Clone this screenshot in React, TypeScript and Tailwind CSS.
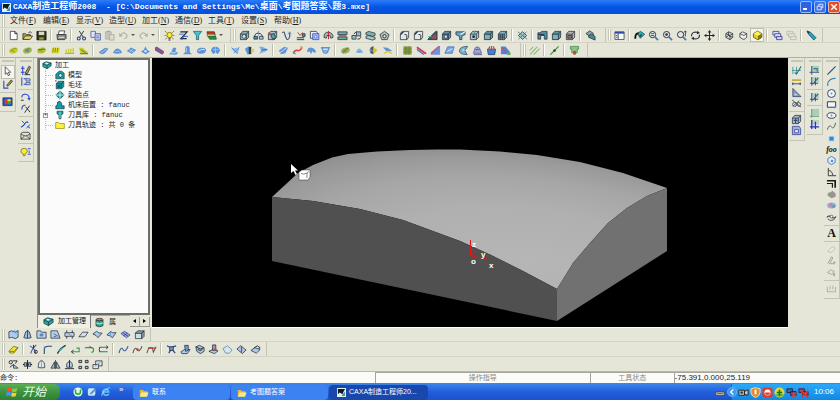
import React from 'react';

// ---------- icon drawing ----------

const K = '#222a35';
const B = '#5d93d6';
const L = '#a9cdf0';
const T = '#3f9aa8';
const G = '#3a9a48';
const D = '#b2b2a6';

const line = (d: string, c = K, w = 1) => <path d={d} fill="none" stroke={c} strokeWidth={w} />;
const fill = (d: string, f = B, s = 'none', w = 0.8) => <path d={d} fill={f} stroke={s} strokeWidth={w} />;

const box = (f = L, s = K) => (
  <>
    {fill('M1.5 4.5L4 1.5H10.5V8L8 10.5H1.5Z', f, s)}
    {line('M1.5 4.5H8V10.5M8 4.5L10.5 1.5', s, 0.8)}
  </>
);
const lens = (inner: React.ReactNode = null) => (
  <>
    <circle cx="5" cy="5" r="3.4" fill="#dfe6e4" stroke={K} />
    {line('M7.5 7.5L11 11', '#3c7fc0', 2)}
    {inner}
  </>
);
const blob = (c: string) => (
  <>
    <ellipse cx="6" cy="6" rx="5" ry="3.2" fill={c} transform="rotate(-20 6 6)" />
    {line('M3 7.5Q6 2.5 9.5 4.5M3.5 5.5L8 8', '#6a8a44', 0.8)}
  </>
);

const ICONS: Record<string, React.ReactNode> = {
  // standard
  new: <>{fill('M2.5 1.5H7.5L10 4V10.5H2.5Z', '#fff', K)}{line('M7.5 1.5V4H10')}</>,
  open: <>{fill('M1 10V4H4L5 5H9V6.5L7 10Z', '#b5a62a', K)}{fill('M1 10.2L3.5 6.5H11.5L9 10.2Z', '#f0e060', K)}{line('M7 3Q9 .8 10.5 3', K, 0.9)}</>,
  save: <>{fill('M1 1.5H11V10.8H1Z', '#33331c', '#111')}{fill('M3 1.8H9V5.6H3Z', '#d8d8c4')}{fill('M3.5 8H8.5V10.5H3.5Z', '#9aa020')}</>,
  print: <>{fill('M3.5 1H9.5L8.5 5H2.5Z', '#fff', K)}{fill('M1 5H11V9L9.5 10.5H1.5Z', '#8a8c84', K)}{line('M3 8H9', '#eee')}</>,
  cut: <>{line('M3.5 1L8 8M8.5 1L4 8')}<circle cx="3" cy="9.2" r="1.6" fill="none" stroke="#27359b" strokeWidth="1.1" /><circle cx="8.8" cy="9.2" r="1.6" fill="none" stroke="#27359b" strokeWidth="1.1" /></>,
  copy: <>{fill('M1 1.5H6V8H1Z', '#dfe4f4', '#4550a8')}{fill('M5.5 4H11.3V11H5.5Z', '#cfd8f2', '#3340a0')}{line('M6.8 6.5H10M6.8 8.5H10', '#3340a0', 0.7)}</>,
  paste: <>{fill('M1.5 2H8V10H1.5Z', '#c5c5b8', D)}{fill('M6 5H11V11H6Z', '#dcdccf', '#a2a296')}{line('M3 1.5H6.5', '#969688')}</>,
  undo: <>{line('M2.5 6Q5 1.5 8.5 4.2T7 9.5', D, 1.3)}{fill('M.8 3.2L1.8 7.8L5.5 6Z', D)}</>,
  redo: <>{line('M9.5 6Q7 1.5 3.5 4.2T5 9.5', D, 1.3)}{fill('M11.2 3.2L10.2 7.8L6.5 6Z', D)}</>,
  bulb: <><circle cx="6" cy="5.5" r="2.9" fill="#ffee30" stroke="#77741a" />{line('M1 1L3 3M11 1L9 3M.5 6H2M11.5 6H10M1.5 10L3.3 8.4M10.5 10L8.7 8.4', '#808020')}{line('M4.8 9.5H7.2M5 11H7', K)}</>,
  zline: <>{line('M2.5 2H10L3 9.5H9.5', K, 1.3)}{line('M1 4.5H6M6.5 7H11M4 11L8 5', '#2c68c8')}</>,
  funnel: <>{fill('M1.5 1.5H10.5L7.2 6V10.5H4.8V6Z', '#49c4d0', '#155c78')}</>,
  layers: <>{fill('M1 2H9L10 5H2Z', '#cc3a20', '#704')}{fill('M1 4.5H9.5L10.5 7.5H2Z', '#e8e020', '#664')}{fill('M2.5 7H10.5L11.3 10H4Z', '#16a040', '#153')}</>,
  // features
  feat1: <>{box('#8fb0b6')}<circle cx="5.5" cy="7" r="2" fill="#d6eef0" stroke={K} strokeWidth=".7" /></>,
  feat2: <>{line('M1.5 9Q1.5 3 6 3.5T10.5 9')}{fill('M1 7H5V10H1Z', T, K)}{fill('M7 7H11V10H7Z', L, K)}{line('M6 1V6', '#7a8ac0')}</>,
  feat3: <>{box('#aac0c4')}{fill('M4 5Q7 3 9 6V9L6 10Z', '#57a2b0', K)}{line('M1.5 2.5L4 5', '#b44')}</>,
  feat4: <>{line('M1.5 3Q3.5 1 4 4T6 9.5T9.5 7.5V3', '#31517a', 1.2)}{line('M7.5 4.5L9.5 2L11.3 4.5', B)}</>,
  feat5: <>{line('M2 8.5H10M2 10.5H10', K)}{line('M3 2.5L5.5 6L8.5 2.5', '#b03a3a')}{fill('M8 4H11V7H8Z', T, K)}</>,
  feat6: <>{fill('M1.5 1.5H8L9.5 3.5V9H1.5Z', '#e8eeff', K)}{fill('M4 4H10.8V10.5H4Z', '#a8b8f4', '#3048c0')}<circle cx="7.3" cy="7.3" r="1.4" fill="#fff" stroke="#3048c0" strokeWidth=".7" /></>,
  feat7: <>{fill('M1 8Q1 2 6 2.5T11 8L8.5 9L7.5 6H4.5L3.5 9Z', '#9bb7b8', K)}{line('M6 1V10', '#c03030', 1.2)}</>,
  feat8: <>{fill('M1 2H11V5H1Z', '#7aa', K)}{fill('M1 7.5H11V10.5H1Z', '#6a9', K)}{line('M2 6.3H10', '#b33', 1.2)}</>,
  feat9: <>{fill('M1 6H5.5V10H1Z', '#8fc0bf', K)}{fill('M6 2H10.5V6.5H6Z', '#95b9d4', K)}{line('M3 4.5L6 1.5M7 10Q11 10 10.5 7')}</>,
  feat10: <>{fill('M1 3L4 1.5L11 3.5V6L8 7L1 5Z', '#7fb2ac', K)}{fill('M1 7L4 6L11 8V10L8 11L1 9Z', '#aac8c3', K)}</>,
  feat11: <>{fill('M1 5L6 1.5L11 5L9 10.5H3Z', '#b8c2bb', K)}<circle cx="6" cy="6.8" r="1.8" fill="#e6e6d8" stroke={K} /></>,
  round: <>{fill('M1.5 10.5V5Q1.5 1.5 5 1.5H10.5V8L8.5 10.5Z', '#dfe8ea', K)}{line('M8.5 10.5V6Q8.5 4.5 6 5', K)}{line('M1.8 5L5 1.8', K, 1.4)}</>,
  draft: <>{fill('M1 10L9.5 1.5H11V10.5H1Z', '#3b5862', K)}{fill('M5 8L10 4V9.5H5Z', '#a74858')}{line('M1 7H5', '#4c9')}</>,
  shell: <>{box('#6b8aa8')}{fill('M3.5 5.5H7V9H3.5Z', '#cfe6f4', K)}</>,
  rib: <>{fill('M1 2H11V5L7.5 6.5V10.5H5V7L1 5Z', '#69a4c4', K)}{line('M6 5L11 2', '#eef', 1.2)}</>,
  hole: <>{box('#b4c4c0')}<circle cx="5" cy="7.3" r="1.5" fill={K} />{line('M6 1V5', T, 1.2)}</>,
  block: <>{box('#5d94a4')}{fill('M2.3 5.5H7.3V9.7H2.3Z', '#86b2b4')}</>,
  mesh: <>{box('#84b3c6')}{line('M3.5 4.5V10.5M5.8 4.5V10.5M1.5 6.5H8M1.5 8.5H8', K, 0.8)}</>,
  diamond: <>{fill('M6 1.8L10.5 6L6 10.2L1.5 6Z', '#9cc7cc', K)}{line('M1 2L11 10M1.5 10L10.5 2', '#4b7378', 0.9)}</>,
  mold1: <>{fill('M1 3H4L5 1.5H11V10H8V6H4V10H1Z', '#4f8db0', K)}{line('M1 5H8')}</>,
  mold2: <>{box('#b6b6ae')}{fill('M3 6H7V9H3Z', '#a07074', K)}</>,
  solid: <>{fill('M1 4L5 1L9 3.5V8L5 6.5Z', '#8ea7ac', K)}{fill('M4 6L7 4.5L11 7V11L7.5 9.5L4 8Z', '#3f8b9a', K)}</>,
  // view
  window: <>{fill('M1 2H11V10.3H1Z', '#fff', '#26324a')}{fill('M1 2H11V4H1Z', '#2d4ea8')}{line('M4.5 4V10', '#26324a')}{line('M2 6H3.5M2 8H3.5', '#445')}</>,
  repaint: <>{fill('M3.5 4L7 1.5L11.5 4.5L7 9Z', '#27b6be', K)}{line('M1.5 9.5Q1 4 5 3.5', '#111', 2)}{fill('M5.5 6L8 4L9 6L7 8Z', '#115f70')}</>,
  zoomall: lens(<>{line('M3.4 4H6.6M3.4 6H6.6', K, 0.8)}</>),
  zoomwin: lens(<circle cx="5" cy="5" r="1.4" fill={K} />),
  zoomdyn: lens(<>{line('M10.2 1V7M9 2.5L10.2 1L11.4 2.5', K, 0.9)}</>),
  rotate: <>{line('M1.8 7Q1.3 2.5 6 2.2L8.5 2.8M10.2 5Q10.8 9.5 6 9.8L3.5 9.2', K, 1.2)}{fill('M8 .8L10.8 3.4L7.5 4.5Z', K)}{fill('M4 11.2L1.2 8.6L4.5 7.5Z', K)}</>,
  pan: <>{line('M6 1.5V10.5M1.5 6H10.5', K, 1.1)}{fill('M6 0L8 2.6H4ZM6 12L8 9.4H4ZM0 6L2.6 4V8ZM12 6L9.4 4V8Z', K)}</>,
  wire: <>{fill('M2 4L5 2L9.5 4V8L6.5 10.5L2 8Z', '#d7d7ca', K)}{line('M2 4L6.5 6L9.5 4M6.5 6V10.5M5 2V6L2 8M5 6L9.5 8', K, 0.8)}</>,
  hidden: <>{fill('M2 4L5 2L9.5 4V8L6.5 10.5L2 8Z', '#efefe6', K)}{line('M2 4L6.5 6L9.5 4', K, 0.8)}</>,
  shade: <>{fill('M1.5 4L6 1.2L10.8 4V8L6.5 10.8L1.5 8Z', '#e4d410', '#4c4708')}{fill('M6.5 6.2L10.8 4V8L6.5 10.8Z', '#847708')}{fill('M2 4L6 1.7L10 4L6.5 6Z', '#fdf47c')}</>,
  cascade: <>{fill('M1 1.5H7.5V5.5H1Z', '#dfe2f4', '#28308c')}{fill('M3 4H9.5V8H3Z', '#dfe2f4', '#28308c')}{fill('M5 7H11V10.5H5Z', '#c8ccf0', '#28308c')}</>,
  cascadeoff: <>{fill('M1 1.5H7.5V5.5H1Z', '#e4e4d8', D)}{fill('M3 4H9.5V8H3Z', '#e4e4d8', D)}{fill('M5 7H11V10.5H5Z', '#e4e4d8', D)}</>,
  pencil: <>{fill('M1 1L5 2.5L11 8.5L8.5 11L3 5Z', '#1ba7c8', '#12475c')}{fill('M1 1L4 2.2L2.3 4Z', '#134')}</>,
  // machining
  m1: blob('#c9d02c'),
  m2: <>{blob('#a9b84c')}<circle cx="6" cy="6" r="1.6" fill="#6384a8" /></>,
  m3: <>{blob('#bcc834')}{line('M2 5H10', '#617c28')}</>,
  m4: <>{fill('M1.5 9L3 3H11L9.5 9Z', '#dcd82c')}{line('M3.5 3L3 8M6 3L5.5 8M8.5 3L8 8', '#7b7d20', 0.9)}</>,
  m5: <>{line('M1 9H11', '#b0b020', 1.4)}{line('M2.5 8V5M5 8V4M7.5 8V4M10 8V3', '#d0cc1c', 1.4)}</>,
  m6: <>{fill('M1 3H5L11 8V10H3Z', '#ccca2a')}{line('M2 9.5H11M3 5L9 9', '#3d7f3c')}</>,
  s1: <>{fill('M.8 8L5 5Q8 1.5 11.3 4Q7.5 10 3.5 10Z', B)}{line('M3 9L9.5 4', L)}</>,
  s2: <>{fill('M1 8.5Q4 3 7 4T11 8.5Q6 10.5 1 8.5Z', B)}{line('M3.5 7.5Q6 5.5 8.5 7.5', L)}</>,
  s3: <>{fill('M.8 6.5L5.5 2.8L11.2 5.5L6.5 9.5Z', B)}{line('M3 5L8.8 7.8M8 4L3.8 8', L)}</>,
  s4: <>{fill('M1 7L4 5.5L6 1.5L8 5.5L11 7L6 10Z', B)}<circle cx="6" cy="6.7" r="1.3" fill="#dcebff" /></>,
  s5: <>{fill('M1 3L3 1.5L11.2 7L9 10.5L1 6Z', '#4a68b4')}{line('M1.5 3L10.5 9', '#d13c4a', 1.6)}</>,
  s6: <>{fill('M1 10L4 7L5.5 3H9L8 7L11 8.5L9 10.5Z', B)}{line('M3.5 8.5H8.5', '#dcebff')}</>,
  s7: <>{fill('M3.5 8V4Q3.5 1 6 1T8.5 4V8L11 10H1Z', B)}{line('M5 3V8', L)}</>,
  s8: <>{fill('M1 7.5Q1 3.5 5 3T11 4.5Q11 9 7 9.5T1 7.5Z', B)}{line('M2.5 6.5Q6 4 9.5 5', '#d8ebff')}</>,
  s9: <>{fill('M1 6Q2 1.5 6 1.8T11 6L8.5 10L6 8L3.5 10Z', B)}{line('M3 5L9 5M6 2V8', L, 0.8)}</>,
  s10: <>{fill('M1 2.5Q5 5 10.5 2L8.5 9.5Q4 9 1 2.5Z', '#8fbce8')}{line('M2 3L8.5 9.5M4 9L10 3', '#4e88c8', 0.8)}</>,
  s11: <>{fill('M1 4L5 1.5L7.5 3V9L4 10.5Z', B)}{fill('M5.2 2H8V10H5.2Z', '#3b3d3c')}{fill('M8 4H11V8H8Z', '#ddd055')}</>,
  s12: <>{fill('M1 2H5L11 5L8 7L1.5 9.5L3.5 5.5Z', '#7db0e6')}{line('M3.5 5.5L10 5', '#2b65b4')}</>,
  s13: <>{fill('M1 6L7 2L11 3L8 9L3 10Z', B)}{line('M1.5 9L10 2.5', '#d8e8ff')}</>,
  s14: <>{line('M1.5 9.5Q3 5 6 6T11 2.5', '#e04030', 1.6)}{line('M1 7L4 10', B, 1.2)}{fill('M8 2L11 1V4Z', '#e8a040')}</>,
  s15: <>{fill('M1 7.5Q2 2 6 3T11 7.5L8.5 8.5L7 6.5L5.5 10L4 7Z', B)}</>,
  s16: <>{line('M1 3H11M2.5 3Q3 9 6 9T9.5 3', B, 1.6)}{line('M4 6.5H8', '#2f64b4')}</>,
  s17: <>{blob('#a0b456')}{line('M3 8.5L9 3', '#4464aa')}</>,
  s18: <>{fill('M2 8.5Q4 3 6.5 4T10 8.5Z', '#86b3e8')}{line('M4 7.5H8', B)}</>,
  s19: <>{fill('M2.5 3L6 1V10L2.5 9Z', '#54565c')}{fill('M6 3L10 4.5L9 8L6 9Z', '#d8c430')}{line('M1.5 6H5', B, 1.6)}</>,
  s20: <>{fill('M1 2.5L6 3L11.2 6.5L5 7Z', '#5d93d6')}{line('M2 9.5L6 7L11 9.5', '#e5c82a', 1.6)}</>,
  e1: <>{fill('M1.5 1.5H10.5V10.5H1.5Z', '#8b9836')}{line('M1.5 4.5H10.5M1.5 7.5H10.5M4.5 1.5V10.5M7.5 1.5V10.5', '#5f8246', 0.8)}</>,
  e2: <>{line('M1 2.5L11 9.5', '#c83c58', 2)}{line('M1 5L8.5 10.3', '#4862c4', 1.3)}</>,
  e3: <>{fill('M1 10.5V8L9 1H11V10.5Z', '#6c95dc')}{line('M1 9.5L10.5 1.5', '#c45a78', 1.3)}</>,
  e4: <>{fill('M1 9L4 2H11L9 9Z', '#7ba6e2', '#3e6fc0')}{line('M3.5 7L9.5 4', '#e4eeff')}</>,
  e5: <>{fill('M10.5 1.5Q2 1.5 1.5 6T10 10.5L7.5 6Z', '#7ab0c4', '#2d4b68')}<circle cx="6" cy="5.5" r="1.3" fill="#b5dae0" /></>,
  e6: <>{fill('M1.5 9L3.5 3Q6 1 8 3L10.5 9Z', '#a6a8d0', '#50549c')}{line('M4 5H8M2 10.5H11', '#50549c')}</>,
  e7: <>{fill('M1.5 4.5H10.5L9.5 10.5H2.5Z', '#4c7cc8', '#24406c')}{line('M3 4.5L4 1.5M6 4.5V1M9 4.5L8 1.5', '#c83848', 1.3)}</>,
  e8: <>{fill('M1 1.5H6L10.5 7V10H1Z', '#4e86d8')}{line('M2 3L6 6V9.5', '#d8485c', 1.4)}{fill('M8 8H11.5V11H8Z', '#58b058')}</>,
  hatch: line('M1 6L4.5 2M1 10.5L9 2M5 10.5L11.5 4', '#7fba6c', 1.1),
  trim: <>{line('M1.5 10.5L10.5 1.5', '#3b9440', 1.4)}<circle cx="6" cy="6" r="1.5" fill="#1e5c28" /></>,
  tool: <>{fill('M1.5 1.5H10.5V4.5H9V8.5H3V4.5H1.5Z', '#8cc08c', '#3f8a40')}{fill('M4.5 6.5H7.5V10.5H4.5Z', '#d33a3a')}</>,
  // left column
  cursor: fill('M3.5 .8V9L5.5 7.3L6.8 10.5L8.3 9.8L7 6.8H9.5Z', '#fff', K),
  sketch: <>{line('M2 2V10H7', '#3146c4', 1.2)}{fill('M5 7L10 1L11.5 2.5L6.5 8Z', '#a89a36', K)}</>,
  palette: <>{fill('M1 2H11V10.5H1Z', '#3050cc', K)}{fill('M3 3.5H6V9H3Z', '#e03828')}{fill('M6 3.5H9.5V6H6Z', '#f4e420')}{fill('M6 6H9.5V9H6Z', '#26aa48')}</>,
  brush: <>{line('M1 3.5H5M1 8H5M3 1V11', '#2946cf', 1.1)}{fill('M5.5 9L10 1L11.5 2.5L8 9.5Z', '#a8a060', K)}{line('M5 10.5H11')}</>,
  mirrorl: <>{line('M2 1.5V10.5M4 3H7M4 9H7', '#2946cf', 1.1)}{fill('M6.5 3H11V5.5H6.5ZM6.5 7H11V9.5H6.5Z', '#c4d2ee', '#35458c')}</>,
  arcl: <>{line('M2 6Q2 2 6 2.5T10 7', '#2946cf', 1.2)}{fill('M8 6.5H11.5L10 9.5Z', '#2946cf')}{line('M1 9H4', K)}</>,
  arcx: <>{line('M2 7Q2 2 6 2.5', '#2946cf', 1.2)}{line('M6 4L11 10M10.5 3L5 10.5')}</>,
  curvel: <>{line('M1 9Q4 8 5.5 5T9 4', '#2946cf', 1.3)}{line('M2 2L5 5M7 10L11 6M8 8L11 10', '#2946cf')}</>,
  mail: <>{fill('M1 4L3 2.5H9L11 4V10H1Z', '#e3e0cc', K)}{line('M1 4Q6 9 11 4M1 10L5 6.5M11 10L7 6.5', K, 0.8)}</>,
  lamp: <>{fill('M1 5.5Q1 2.5 4.5 2.5T8 5.5Q8 7.5 5.5 8.5V10.5H3.5V8.5Q1 8 1 5.5Z', '#f5ec3c', '#6c6820')}{line('M8.5 3H11.5M8.5 9H11.5M10 5V8', '#2946cf')}</>,
  // tree
  cam: <>{fill('M1 4L5 2L11 3.5V7L6 10.5L1 8Z', '#2fa3a3', '#103c3c')}{line('M1 4.5L6 6.5L11 3.5M6 6.5V10.5', '#103c3c', 0.8)}{fill('M5 3L8 4L6 5.3L3.4 4.4Z', '#d9f4f0')}</>,
  model: <>{fill('M1 10.5V5L5 1.5H8L11 4V10.5Z', '#18a0a6', '#0b3f46')}<circle cx="6.5" cy="6.5" r="2.2" fill="#d4f0f0" stroke="#0b3f46" /></>,
  blank: <>{box('#189aa0', '#0a3d44')}{fill('M3 6H6.5V9.5H3Z', '#0b5d66')}{line('M0 1H2', '#b030b0', 1.5)}</>,
  origin: <>{fill('M6 1L11 6L6 11L1 6Z', '#1e9aa2', '#0b3f46')}{line('M6 1V11M1 6H11', '#e6f8f8')}</>,
  post: fill('M1 10.5V7L3 5.5V2.5L6 1.5L8 4V7H11V10.5Z', '#149ba4', '#08373d'),
  cutter: <>{fill('M2.5 1.5H9.5V4.5L7.2 6V10.5H4.8V6L2.5 4.5Z', '#1fa2a6', '#08373d')}{line('M6 2V10', '#c8f0ee', 0.8)}</>,
  folder: fill('M.8 10.2V3H4.5L5.5 4.2H11.2V10.2Z', '#fbf23c', '#8c8410'),
  db: <><ellipse cx="6" cy="3" rx="3.8" ry="1.6" fill="#d6706c" stroke={K} strokeWidth=".7" />{fill('M2.2 3.3V9.5Q6 12 9.8 9.5V3.3Q6 5.5 2.2 3.3Z', '#22aa94', K)}{line('M2.2 6.5Q6 8.5 9.8 6.5', '#e8f1a0')}</>,
  // bottom rows
  b1: <>{fill('M1 3L4 2L8 3.5L11 1.5V9L8 10.5L4 9L1 10Z', L, K)}{line('M7 1L9 5', B)}</>,
  b2: <>{fill('M2 9.5L4 3Q6 .5 8 3L10 9.5Q6 11 2 9.5Z', '#9dbede', K)}{line('M6 1V10', K, 0.8)}</>,
  b3: <>{fill('M1 2H5L6 3.5H11V10H1Z', '#bcd2ea', K)}{fill('M4 5H8V8H4Z', '#5c88c4')}</>,
  b4: <>{fill('M1 2H8L11 10H1Z', '#bcd2ea', K)}{line('M4 5L9 8M4 8H7', '#3b62a8')}</>,
  b5: <>{line('M3 1.5V10.5M9 1.5V10.5')}{fill('M1 4H11V8H1Z', '#c3d5e6', K)}{line('M3 4L9 8', B)}</>,
  b6: fill('M1 8.5L5 3.5H11L7.5 8.5Z', '#cfe0ee', K),
  b7: <>{fill('M1 5.5L5 2.5Q7 5 11 4.5L6.5 9.5Q5 6.5 1 5.5Z', L, K)}</>,
  b8: <>{fill('M1 6.5L5 2.5L7 4L11 4L7 9.5L4.5 7.5Z', L, K)}{line('M5 2.5L4.5 7.5', B)}</>,
  b9: <>{fill('M1 5L5 2.5L11 6.5L7 9.5Z', '#a3aede', '#34439a')}{line('M3 4L9 8M8 4.5L4 7.5', '#34439a')}</>,
  b10: <>{fill('M1.5 4.5H8.5V10.5H1.5Z', '#cfe0e4', K)}{fill('M1.5 4.5L4 2H11L8.5 4.5ZM8.5 10.5L11 8V2L8.5 4.5Z', '#98b0b4', K)}</>,
  eraser: <>{fill('M1 8L6 2.5L11 4L6.5 9.8L2 9.8Z', '#f1e428', '#6b6412')}{line('M1.5 8L6.5 8.2L10.5 4', '#6b6412', 0.8)}</>,
  c1: <>{line('M2 2Q9 6 8 10.5M9 1Q4 6 3 10.5', '#4053a8', 1.1)}<circle cx="8.5" cy="8.5" r="1.7" fill="none" stroke={K} />{line('M6 1V5')}</>,
  c2: <>{line('M2.5 11V6Q2.5 2.5 7 2.5H11', '#2d4878', 1.2)}{line('M2.5 2.5V5', B)}</>,
  c3: <>{line('M1.5 10.5L5 5L10.5 1.5', K, 1.3)}{line('M3.5 7.5L7 4', T, 2)}</>,
  c4: <>{line('M1.5 8.5H10V4.5H7', G, 1.2)}{line('M4 6.5L1.5 8.5L4 10.5')}</>,
  c5: <>{line('M1 4H8Q10.5 4 10.5 6.5T8 9', G, 1.2)}{line('M6 2.5L8 4', K)}</>,
  c6: <>{line('M1.5 3.5H10.5M1.5 8.5H10.5', '#2a8060', 1.2)}{line('M2 3.5Q.5 6 2 8.5M9 1.8L11 3.5L9 5.2')}</>,
  c7: line('M1 10Q3 2 5.5 6T11 2.5', '#3b5f9c', 1.2),
  c8: <>{line('M1 10Q3 2 5.5 6T11 2.5', '#555', 1.1)}<circle cx="6" cy="6" r="1.3" fill="#d43434" /></>,
  c9: <>{line('M1 10L3 4H7L8 9L11 3', '#555', 1.1)}{line('M3 4.5H11', '#d03030', 1.3)}</>,
  f1: <>{line('M1 2L5 4L11 2M3 10L6 5L10 10', '#2b4384', 1.3)}{fill('M4 3H8V7H4Z', '#6e92cc', K)}</>,
  f2: <>{fill('M1 8.5L5 6H11L8 10.5H2Z', L, K)}{fill('M5 1.5H9V7L6 8Z', '#6f9fd0', K)}</>,
  f3: <>{fill('M2 3L6 1.5L11 4V8L7 10.5L3 8Z', '#a8c4d8', K)}{line('M2 3L7 5.5L11 4M4 6Q7 8 9 6')}</>,
  f4: <>{fill('M1 8L6 5.5L11 7.5L7 10.5Z', L, K)}{fill('M5 1H8.5V7H5Z', '#9a9cb8', K)}<circle cx="8" cy="6" r="1.4" fill="#c84444" /></>,
  f5: <>{fill('M1 5L6 2L11 6.5L8 10H4Z', '#d5e7f0', '#577e98')}</>,
  f6: <>{fill('M1 5.5L5 2L11 6.5L7 10.5Z', L, K)}{line('M6 2V9.5', '#c43838', 1.4)}</>,
  f7: <>{fill('M1 7L5.5 4L11 6L7 10Z', L, K)}{line('M4 4.5L8 2L11 4L9.5 5.5', K)}</>,
  g1: <><circle cx="3" cy="3.5" r="1.8" fill="none" stroke={K} />{fill('M6 6L11 10H6Z', L, K)}{line('M5 2H10L8 5M2 9L6 6')}</>,
  g2: <>{line('M6 1V11M1 6H11', K, 1.1)}{fill('M2.5 4H5V8H2.5ZM7 4H9.5V8H7Z', '#97adc8', K)}</>,
  g3: <>{fill('M2.5 9.5Q2 3 6 1.5Q10 3 9.5 9.5Z', '#dfe8ec', K)}{line('M6 1.5V11', B, 0.8)}</>,
  g4: <>{fill('M1 10L5 3V10ZM11 10L7 3V10Z', '#a5b8c8', K)}{line('M6 1V11', K, 0.8)}</>,
  g5: <>{fill('M3 9Q2 4 6 2.5Q10 4 9 9Z', '#b8cede', K)}{line('M1 10.5H11M6 1V9')}</>,
  g6: <>{fill('M1 1.5H4V4H1ZM8 1.5H11V4H8ZM1 8H4V10.5H1ZM8 8H11V10.5H8Z', '#c8ccc4', K, 1)}</>,
  g7: <>{fill('M4 2H11V7.5H4Z', '#d0dee8', K)}{fill('M1 6H7V10.5H1Z', '#e8e8e0', K)}{line('M3 8L8.5 4', B)}</>,
  // right columns
  r1: <>{line('M1 6H11M2 2V10M6 2V10', T)}{line('M4 8L6 10L11 1.5', '#34746c', 1.2)}</>,
  r2: <>{line('M1 4.5H11', '#c0a020', 1.6)}{line('M1 8.5H11M2 7V10M10 7V10', '#3f4858')}</>,
  r3: <>{fill('M2 1.5V10.5H11Z', '#849cc8', '#28406c')}{fill('M4 6.5V9H6.8Z', '#e6e6d8')}</>,
  r4: <>{line('M1 2L11 10M2 9L9 3', '#444e60')}<circle cx="4" cy="7" r="2.2" fill="none" stroke="#444e60" /><circle cx="8.5" cy="7" r="2" fill="none" stroke="#444e60" /></>,
  r5: <>{box('#a8b8c8')}{line('M5 5V10M3 7H7', '#234a8c', 1.2)}</>,
  r6: <>{fill('M1.5 1.5H9L10.5 4V10.5H1.5Z', '#a5b0e0', '#283a90')}{fill('M4 5H8V8.5H4Z', '#eef', '#283a90')}</>,
  axis1: <>{fill('M3 1H11V7H3Z', '#a8d0b4')}{line('M3 1V10.5M.5 8H11M5 4H9V7', '#35558a', 1.1)}</>,
  axis2: <>{fill('M3 1H11V7H3Z', '#b6d4c0')}{line('M3 1V10.5M1 8H10M4 9L10 2M7 2V10', '#35558a', 1.1)}</>,
  axis3: <>{fill('M3 1H11V8H3Z', '#a8d0b4')}{line('M3 1V10.5M1 9H11', '#6a9878', 1.1)}</>,
  axis4: <>{fill('M3 1H11V6H3Z', '#b6d4c0')}{line('M3 1V11M1 8.5H11M7 3V11', '#2a32bc', 1.4)}</>,
  line: line('M1.5 10.5L6 6L10.5 1.5', '#2d5882', 1.2),
  arc: <>{line('M1.5 10.5Q2 2.5 10.5 2.5', '#3672b4', 1.1)}<circle cx="2" cy="9.5" r="1" fill={B} /></>,
  circle: <><circle cx="6" cy="6" r="4.3" fill="#f4f6f4" stroke="#2a3a6c" /><circle cx="6" cy="6" r="1.1" fill={B} /></>,
  rect: <>{fill('M1.5 3H10.5V9H1.5Z', '#f4f6f4', '#22304c', 1)}{fill('M8.5 8H11V10H8.5Z', B)}</>,
  ellipse: <><ellipse cx="6" cy="6" rx="4.8" ry="3" fill="#f4f6f4" stroke="#22304c" /><circle cx="6" cy="6" r="1.1" fill={B} /></>,
  spline: line('M1.5 9.5Q3.5 3 6 6.5T10.5 2', '#555', 1),
  point: fill('M3.5 4H8.5V8.5H3.5Z', '#2d84d8', '#8cbcec'),
  polygon: <>{fill('M6 1.5L10 4V8L6 10.5L2 8V4Z', '#dcebf8', '#345c9c')}<circle cx="6.5" cy="6.5" r="1.4" fill={B} /></>,
  conic: line('M2.5 1V9.5H11M2.5 4Q6 3 7.5 9', '#333', 1),
  offset: <>{line('M1 3H10V10.5', '#1a1a1a', 1.8)}{line('M1 6H7V10.5', '#1a1a1a', 1.3)}</>,
  grayblob: fill('M1.5 7Q2 3 5 3.5L7 2L10.5 5V8.5L6 10Z', '#96968c'),
  color: <><ellipse cx="6" cy="6" rx="4.8" ry="3.2" fill="#8cb4dc" />{fill('M3 5L6 3L8 6L5 8Z', '#d47ca8')}{fill('M7 6L10 5V8L7 9Z', '#5c9cc8')}</>,
  waves: <>{line('M1 6Q3 3 6 5.5T11 5', K, 1.1)}{line('M2 7.5Q6 11 10 7', '#444')}<circle cx="6" cy="5" r="1.5" fill="#fff" stroke={K} strokeWidth=".7" /></>,
  dis1: <>{fill('M2 8L7 3L10 4.5L5.5 9.5Z', '#ecece2', D)}</>,
  dis2: <>{line('M2 9.5L6 2L7.5 3L4 9.5H10', '#a0a094')}<circle cx="9" cy="8" r="1.3" fill={D} /></>,
  dis3: <>{line('M1.5 6L5 3L9 5L6 8Z', '#a0a094')}{fill('M7.5 6.5H10V10H7.5Z', D)}</>,
  dis4: line('M1.5 4V9.5H10.5V4M4.5 3V7M7.5 3V7', D, 1.1),
};

const LETTERS: Record<string, string> = {
  foo: "font-['Liberation_Serif'] text-[8px] italic font-bold",
  A: "font-['Liberation_Serif'] text-[12px] font-bold",
};

const Icon = ({ name, className = 'size-3' }: { name: string; className?: string }) => (
  <svg viewBox="0 0 12 12" className={`${className} shrink-0`} aria-hidden="true">{ICONS[name]}</svg>
);

// ---------- toolbars ----------

interface BarProps {
  items: string;
  label: string;
  pressed?: string;
  className?: string;
}

// items is a space separated list: icon names, "|" for a separator and "v" for a drop arrow
const Toolbar: React.FC<BarProps> = ({ items, label, pressed = '', className = '' }) => (
  <div role="toolbar" aria-label={label} className={`flex h-full items-center border-r border-[#c3c3b6] ${className}`}>
    <span className="ml-[2px] mr-px h-3 w-[3px] border-x border-[#c6c6b8] bg-white" />
    {items.split(' ').map((item, i) => {
      if (item === '|') return <span key={i} className="mx-[2px] h-3 w-[2px] border-l border-[#bdbdb0] bg-white" />;
      if (item === 'v') {
        return (
          <button key={i} aria-label="More" className="flex w-[6px] justify-center">
            <span className="border-x-2 border-t-2 border-x-transparent border-t-[#555]" />
          </button>
        );
      }
      return (
        <button
          key={i}
          aria-label={item}
          className={`flex h-[14px] w-[14px] shrink-0 items-center justify-center ${item === pressed ? 'border border-[#bdbdb0] bg-[#f6f6ee]' : ''}`}
        >
          <Icon name={item} className="size-[11px]" />
        </button>
      );
    })}
  </div>
);

const SideBar: React.FC<BarProps> = ({ items, label, pressed = '', className = '' }) => (
  <div role="toolbar" aria-label={label} className={`flex w-4 shrink-0 flex-col items-center self-start border-b border-r border-[#c3c3b6] pb-1 ${className}`}>
    <span className="mb-[3px] mt-[2px] h-[2px] w-3 border-y border-[#c6c6b8]" />
    {items.split(' ').map((item, i) => {
      if (item === '|') return <span key={i} className="my-[2px] h-px w-full shrink-0 bg-[#c3c3b6]" />;
      return (
        <button
          key={i}
          aria-label={item}
          className={`flex min-h-[11px] w-[14px] shrink-0 grow items-center justify-center ${item === pressed ? 'border border-[#bdbdb0] bg-[#f6f6ee]' : ''}`}
        >
          {LETTERS[item] ? <span className={`${LETTERS[item]} leading-[11px] text-[#111]`}>{item}</span> : <Icon name={item} className="size-[11px]" />}
        </button>
      );
    })}
  </div>
);

// ---------- window parts ----------

const TITLE = [
  { text: 'CAXA' },
  { text: '制造工程师', cjk: true },
  { text: '2008  - [C:\\Documents and Settings\\Me\\' },
  { text: '桌面', cjk: true },
  { text: '\\' },
  { text: '考图题答案', cjk: true },
  { text: '\\' },
  { text: '题', cjk: true },
  { text: '3.mxe]' },
];

const MENUS = [
  ['文件', 'F'], ['编辑', 'E'], ['显示', 'V'], ['造型', 'U'], ['加工', 'N'],
  ['通信', 'D'], ['工具', 'T'], ['设置', 'S'], ['帮助', 'H'],
];

const TREE = [
  { icon: 'model', text: '模型' },
  { icon: 'blank', text: '毛坯' },
  { icon: 'origin', text: '起始点' },
  { icon: 'post', text: '机床后置 : fanuc' },
  { icon: 'cutter', text: '刀具库 : fanuc', expand: true },
  { icon: 'folder', text: '刀具轨迹 : 共 0 条' },
];

const AppLogo = () => (
  <svg viewBox="0 0 10 10" className="size-[9px] shrink-0" aria-hidden="true">
    <rect width="10" height="10" fill="#e8f0ee" />
    <path d="M1 1H9L7.5 3.5L6 7L3 5L1 7Z" fill="#0d1c20" />
    <path d="M5 9L8.800 4V9Z" fill="#2c98a8" />
  </svg>
);

const TitleBar = () => (
  <header className="flex h-[14px] shrink-0 items-center bg-gradient-to-b from-[#2a7cf8] via-[#0454e4] to-[#0450e0] pl-[2px] text-white">
    <AppLogo />
    <h1 className="ml-[2px] flex-1 whitespace-pre font-['Liberation_Mono','Noto_Sans_CJK_SC',monospace] text-[8px] font-bold leading-[14px]">
      {TITLE.map((part, i) => (
        <span key={i} className={part.cjk ? 'text-[9px]' : ''}>{part.text}</span>
      ))}
    </h1>
    <div className="flex gap-[2px]">
      <button aria-label="Minimize" className="flex size-3 items-end rounded-xs border border-[#9dbcf6] bg-[#2c62e4] p-[2px]">
        <span className="h-[2px] w-1 bg-white" />
      </button>
      <button aria-label="Restore" className="flex size-3 items-center justify-center rounded-xs border border-[#9dbcf6] bg-[#3c70e8]">
        <svg viewBox="0 0 10 10" className="size-2" fill="none" stroke="#fff"><path d="M3.5 3.5V1.5H8.5V6H6.5M1.5 4H6.5V8.5H1.5Z" /></svg>
      </button>
      <button aria-label="Close" className="flex size-3 items-center justify-center rounded-xs border border-[#f0b8a4] bg-[#e04f28]">
        <svg viewBox="0 0 10 10" className="size-2" fill="none" stroke="#fff" strokeWidth="1.8"><path d="M1.5 1.5L8.5 8.5M8.5 1.5L1.5 8.5" /></svg>
      </button>
    </div>
  </header>
);

const MenuBar = () => (
  <nav className="flex h-[14px] shrink-0 items-center border-b border-[#d3d3c6]">
    <span className="ml-[2px] h-3 w-[3px] border-x border-[#c6c6b8] bg-white" />
    <div className="ml-[5px] flex">
      {MENUS.map(([name, key]) => (
        <button key={key} className="w-[33px] whitespace-nowrap text-left font-['Liberation_Serif','Noto_Sans_CJK_SC',serif] text-[8px] leading-3 text-[#1c1c1c]">
          {name}(<u>{key}</u>)
        </button>
      ))}
    </div>
  </nav>
);

const TreePanel = () => (
  <aside className="ml-[3px] mr-[2px] flex w-[113px] shrink-0 flex-col border-l border-[#8f8f86]">
    <div className="flex-1 border-2 border-[#6e6e68] bg-[#fbfbfb] pl-[2px] text-[7px] leading-[10px] text-[#222]">
      <div className="flex h-[10px] items-center gap-[3px]">
        <Icon name="cam" className="size-[10px]" />加工
      </div>
      <ul className="ml-[3px] border-l border-dotted border-[#bbb]">
        {TREE.map((node) => (
          <li key={node.text} className="flex h-[10px] items-center whitespace-pre">
            <span className="flex w-[7px] items-center">
              {node.expand
                ? <button aria-label="Expand" className="-ml-[3px] size-[5px] border border-[#999] bg-white text-center text-[5px] leading-[3px]">+</button>
                : <span className="h-px w-full border-t border-dotted border-[#bbb]" />}
            </span>
            <Icon name={node.icon} className="mx-[2px] size-[10px]" />
            <span className="ml-px">{node.text}</span>
          </li>
        ))}
      </ul>
    </div>
    <div className="flex h-[13px] shrink-0 items-center text-[7px] text-[#111]">
      <button className="flex h-full items-center gap-1 border-r border-[#777] bg-[#efefe4] pl-[5px] pr-1">
        <Icon name="cam" className="size-[11px]" />加工管理
      </button>
      <button className="flex h-full flex-1 items-center gap-1 border-t border-[#aaa] pl-[3px]">
        <Icon name="db" className="size-[11px]" />属
      </button>
      <button aria-label="Scroll left" className="flex h-[10px] w-[10px] items-center justify-center border-b border-r border-[#999]">
        <span className="border-y-2 border-r-[3px] border-y-transparent border-r-black" />
      </button>
      <button aria-label="Scroll right" className="flex h-[10px] w-[10px] items-center justify-center border-b border-r border-[#999]">
        <span className="border-y-2 border-l-[3px] border-y-transparent border-l-black" />
      </button>
    </div>
  </aside>
);

const Viewport = () => (
  <main className="min-w-0 flex-1 border-b border-white bg-black">
    <svg viewBox="152 58 636 269" className="h-full w-full" role="img" aria-label="3D model">
      <defs>
        <radialGradient id="top" gradientUnits="userSpaceOnUse" cx="0" cy="0" r="1" gradientTransform="translate(530 262) rotate(6) scale(330 118)">
          <stop offset="0" stopColor="#b6b6b6" />
          <stop offset=".45" stopColor="#b0b0b0" />
          <stop offset=".7" stopColor="#a6a6a6" />
          <stop offset=".85" stopColor="#9a9a9a" />
          <stop offset="1" stopColor="#888888" />
        </radialGradient>
      </defs>
      <path
        d="M272 197L298 173L313 165L332 157.5L348 154L377 151.5L410 150L437 149.5L460 149.5L500 151.5L537 155L580 162L623 173L667 188L647 196L627 208L608 223L590 243L573 263L557 289L523 271L491 255L460 241L403 220L360 209L313 201Z"
        fill="url(#top)"
      />
      <path d="M272 197L313 201L360 209L403 220L460 241L491 255L523 271L557 289V321L272 261Z" fill="#505050" />
      <path d="M557 289L573 263L590 243L608 223L627 208L647 196L667 188V251L557 321Z" fill="#717171" />
      <path d="M470.5 240V256M471 256L487 259M471 256L479 249M473 250L480 257" fill="none" stroke="#e01818" />
      <g className="fill-white font-['Liberation_Sans'] text-[8px] font-bold">
        <text x="472" y="247">z</text>
        <text x="481" y="257">y</text>
        <text x="471" y="264">o</text>
        <text x="489" y="268">x</text>
      </g>
      <path d="M291 164V173L293.500 171L295.500 175L297 174L295 170.500H298Z" fill="#fff" />
      <path d="M299 172L302 170H310V177L308 180H299Z" fill="#fff" stroke="#333" strokeWidth=".5" />
      <path d="M301 173.500Q303.500 175 307 173V178M307 173L309 171.500" fill="none" stroke="#555" strokeWidth=".7" />
    </svg>
  </main>
);

const StatusBar = () => (
  <footer className="flex h-3 shrink-0 items-stretch border-t border-[#b8b8ac] bg-[#fbfbf8] text-[7px] leading-[10px]">
    <div className="flex flex-[376] items-center text-[#222]">
      <label htmlFor="command">命令:</label>
      <input id="command" className="ml-1 min-w-0 flex-1 bg-transparent outline-none" />
    </div>
    <div className="flex-[215] border-l border-t border-[#a5a59c] text-center text-[#888]">操作指导</div>
    <div className="flex-[83] border-l border-t border-[#a5a59c] text-center text-[#888]">工具状态</div>
    <div className="flex-[166] border-l border-t border-[#a5a59c] font-['Liberation_Sans'] text-[8px] text-[#222]">-75.391,0.000,25.119</div>
  </footer>
);

const Folder = () => (
  <svg viewBox="0 0 12 12" className="size-[10px] shrink-0"><path d="M1 10V2.500H5L6 4H10V10Z" fill="#e8b93c" /><path d="M1 10.500L3 5.500H11.500L9.500 10.500Z" fill="#fdea8c" /></svg>
);

const TaskBar = () => (
  <div className="flex h-[17px] shrink-0 items-stretch bg-gradient-to-b from-[#3d88ec] via-[#2360dc] to-[#1d50cc] pt-px font-['Liberation_Sans','Noto_Sans_CJK_SC',sans-serif] text-[7px] text-white">
    <button className="flex w-[60px] items-center gap-1 rounded-r-md bg-gradient-to-b from-[#5cac58] via-[#3b9440] to-[#2f8034] pl-[6px] text-[12px] italic leading-none text-[#eefbe8]">
      <svg viewBox="0 0 12 12" className="size-3">
        <path d="M1.500 2Q3.500 .5 5.800 2L5.200 5.500Q3 4.300 .8 5.500Z" fill="#f0582c" />
        <path d="M6.500 2.200Q9 3.300 11.300 2L10.600 5.600Q8.500 6.700 5.900 5.700Z" fill="#8ccc3c" />
        <path d="M.7 6.300Q3 5 5.100 6.300L4.400 10Q2.500 8.800 0 10Z" fill="#4c90f0" />
        <path d="M5.800 6.600Q8.300 7.500 10.500 6.400L9.800 10Q7.500 11.200 5.100 10.200Z" fill="#fccc38" />
      </svg>
      开始
    </button>
    <div className="ml-[13px] flex w-[60px] items-center gap-[4px]">
      <button aria-label="Messenger">
        <svg viewBox="0 0 12 12" className="size-[10px]"><circle cx="6" cy="6" r="5.500" fill="#e8fbe8" /><path d="M3 3V6Q3 8.500 6 8.500T9 6V3" fill="none" stroke="#28b040" strokeWidth="2" /></svg>
      </button>
      <button aria-label="Desktop">
        <svg viewBox="0 0 12 12" className="size-[10px]"><rect x="1" y="1.500" width="9" height="9" rx="2" fill="#c8e4f8" /><path d="M3 8L9 2L10.500 4L5 9Z" fill="#4c94d0" /></svg>
      </button>
      <button aria-label="Internet Explorer">
        <svg viewBox="0 0 12 12" className="size-[10px]" fill="none"><path d="M9.500 8.500Q6 11.500 3.300 8.500T4 3Q8 1.500 9.300 6H3" stroke="#62c4fa" strokeWidth="1.800" /><path d="M1 10.500Q0 8 5 4T11 1.500" stroke="#b4e4fc" /></svg>
      </button>
      <button aria-label="More" className="mb-1 ml-1 text-[8px] leading-none">»</button>
    </div>
    <div className="flex flex-1 items-stretch gap-px pt-px">
      <button className="flex w-[97px] items-center gap-[3px] rounded-sm bg-[#3d82f2] pl-[6px]"><Folder />联系</button>
      <button className="flex w-[97px] items-center gap-[3px] rounded-sm bg-[#3d82f2] pl-[6px]"><Folder />考图题答案</button>
      <button className="flex w-[99px] items-center gap-[3px] rounded-sm bg-[#1a47ac] pl-2"><AppLogo />CAXA制造工程师20...</button>
    </div>
    <svg viewBox="0 0 12 12" className="size-[10px] self-center" aria-label="Keyboard"><path d="M1 6H11V10H1Z" fill="#d8d8c8" stroke="#444" /><path d="M2.500 8H9.500" stroke="#444" /></svg>
    <div className="ml-[6px] flex items-center gap-px border-l border-[#0c68c8] bg-gradient-to-b from-[#2ca8f8] to-[#1088e4] pr-[6px]">
      <button aria-label="Show hidden icons" className="-ml-[5px]">
        <svg viewBox="0 0 12 12" className="size-[10px]"><circle cx="6" cy="6" r="5.500" fill="#3c98f0" stroke="#90ccfa" strokeWidth=".6" /><path d="M7.500 3L4.500 6L7.500 9" stroke="#fff" strokeWidth="1.600" fill="none" /></svg>
      </button>
      <svg viewBox="0 0 12 12" className="size-[11px]"><path d="M1 3.500H7V9H1ZM7 5L11 3V9L7 8Z" fill="#ccc" stroke="#222" /><circle cx="4" cy="6" r="1.500" fill="#444" /></svg>
      <svg viewBox="0 0 12 12" className="size-[11px]"><path d="M6 .8L11 2V6Q10.500 10 6 11.500Q1.500 10 1 6V2Z" fill="#e8882c" stroke="#fbe0b0" /><path d="M6 3V8" stroke="#fff" strokeWidth="2" /></svg>
      <svg viewBox="0 0 12 12" className="size-[11px]"><rect x=".5" y=".5" width="11" height="11" rx="2" fill="#e43c2c" /><circle cx="6" cy="6" r="3.300" fill="#fff" /><path d="M3.500 6H8.500V8Q6 9.500 3.500 8Z" fill="#e43c2c" /></svg>
      <svg viewBox="0 0 12 12" className="size-[11px]"><circle cx="6" cy="6" r="5.500" fill="#e8d828" /><path d="M1 8Q6 13 11 8Z" fill="#3cae38" /><path d="M6 3V9M3 6H9" stroke="#1f6a24" strokeWidth="1.800" /></svg>
      <svg viewBox="0 0 12 12" className="size-[11px]"><path d="M1 2H7V6H1ZM5 5H11V9H5Z" fill="#4868a8" stroke="#1c2444" /><path d="M6 6L11 11M11 6L6 11" stroke="#e83428" strokeWidth="1.600" /></svg>
      <svg viewBox="0 0 12 12" className="size-[11px]"><path d="M1 2H7V6H1ZM5 5H11V9H5Z" fill="#a04868" stroke="#44203c" /><path d="M3 4L11 11M11 4L4 11" stroke="#e83428" strokeWidth="2" /></svg>
      <time className="ml-1 text-[8px]">10:06</time>
    </div>
  </div>
);

export default function App() {
  return (
    <div className="flex h-screen flex-col overflow-hidden bg-[#e6e6d8] font-['Liberation_Mono','Noto_Sans_CJK_SC',monospace]">
      <TitleBar />
      <MenuBar />
      <div className="flex h-[15px] shrink-0 border-b border-[#d3d3c6]">
        <Toolbar label="标准" items="new open save | print | cut copy paste undo v redo v | bulb zline funnel layers v" className="pr-[6px]" />
        <Toolbar label="特征" items="feat1 feat2 feat3 feat4 feat5 feat6 feat7 feat8 feat9 feat10 feat11 | round round draft shell rib hole block mesh | diamond | mold1 block mold2 | solid" className="pr-2" />
        <Toolbar label="显示" pressed="shade" items="window | repaint zoomall zoomwin zoomdyn rotate pan | wire hidden shade | cascade cascadeoff | pencil" className="pr-1" />
      </div>
      <div className="flex h-[14px] shrink-0">
        <Toolbar label="加工" items="m1 m2 m3 m4 m5 m6 | s1 s2 s3 s4 s5 s6 s7 s8 s9 | s10 s11 s12 | s13 s14 s15 s16 | s17 s18 s19 s20 | e1 e2 e3 e4 e5 e6 e7 e8" className="pr-2" />
        <Toolbar label="轨迹" items="hatch | trim | tool" className="pr-[6px]" />
      </div>
      <div className="flex min-h-0 flex-1 border-t border-[#b0b0a4]">
        <SideBar label="状态" pressed="cursor" items="cursor sketch | palette" className="h-[54px]" />
        <SideBar label="编辑" items="brush mirrorl | arcl arcx | curvel mail | lamp" className="ml-[2px]" />
        <TreePanel />
        <Viewport />
        <SideBar label="标注" items="r1 r2 r3 r4 | r5 r6" className="ml-px" />
        <SideBar label="坐标系" items="axis1 axis2 | axis2 | axis3 axis4" className="ml-[2px]" />
        <SideBar label="曲线" items="line arc circle rect ellipse spline point foo polygon conic offset grayblob color waves | A | dis1 dis2 dis3 | dis4" className="ml-px h-[241px]" />
      </div>
      <div className="flex h-[14px] shrink-0 border-b border-[#d3d3c6]">
        <Toolbar label="曲面" items="b1 b2 b3 b4 b5 b6 b7 b8 b9 b10" className="pr-1" />
      </div>
      <div className="flex h-[15px] shrink-0 border-b border-[#d3d3c6]">
        <Toolbar label="线面编辑" items="eraser | c1 c2 c3 c4 c5 c6 | c7 c8 c9 | f1 f2 f3 f4 f5 f6 f7" className="pr-1" />
      </div>
      <div className="flex h-[14px] shrink-0">
        <Toolbar label="几何变换" items="g1 g2 g3 g4 g5 g6 g7" className="pr-1" />
      </div>
      <StatusBar />
      <TaskBar />
    </div>
  );
}
